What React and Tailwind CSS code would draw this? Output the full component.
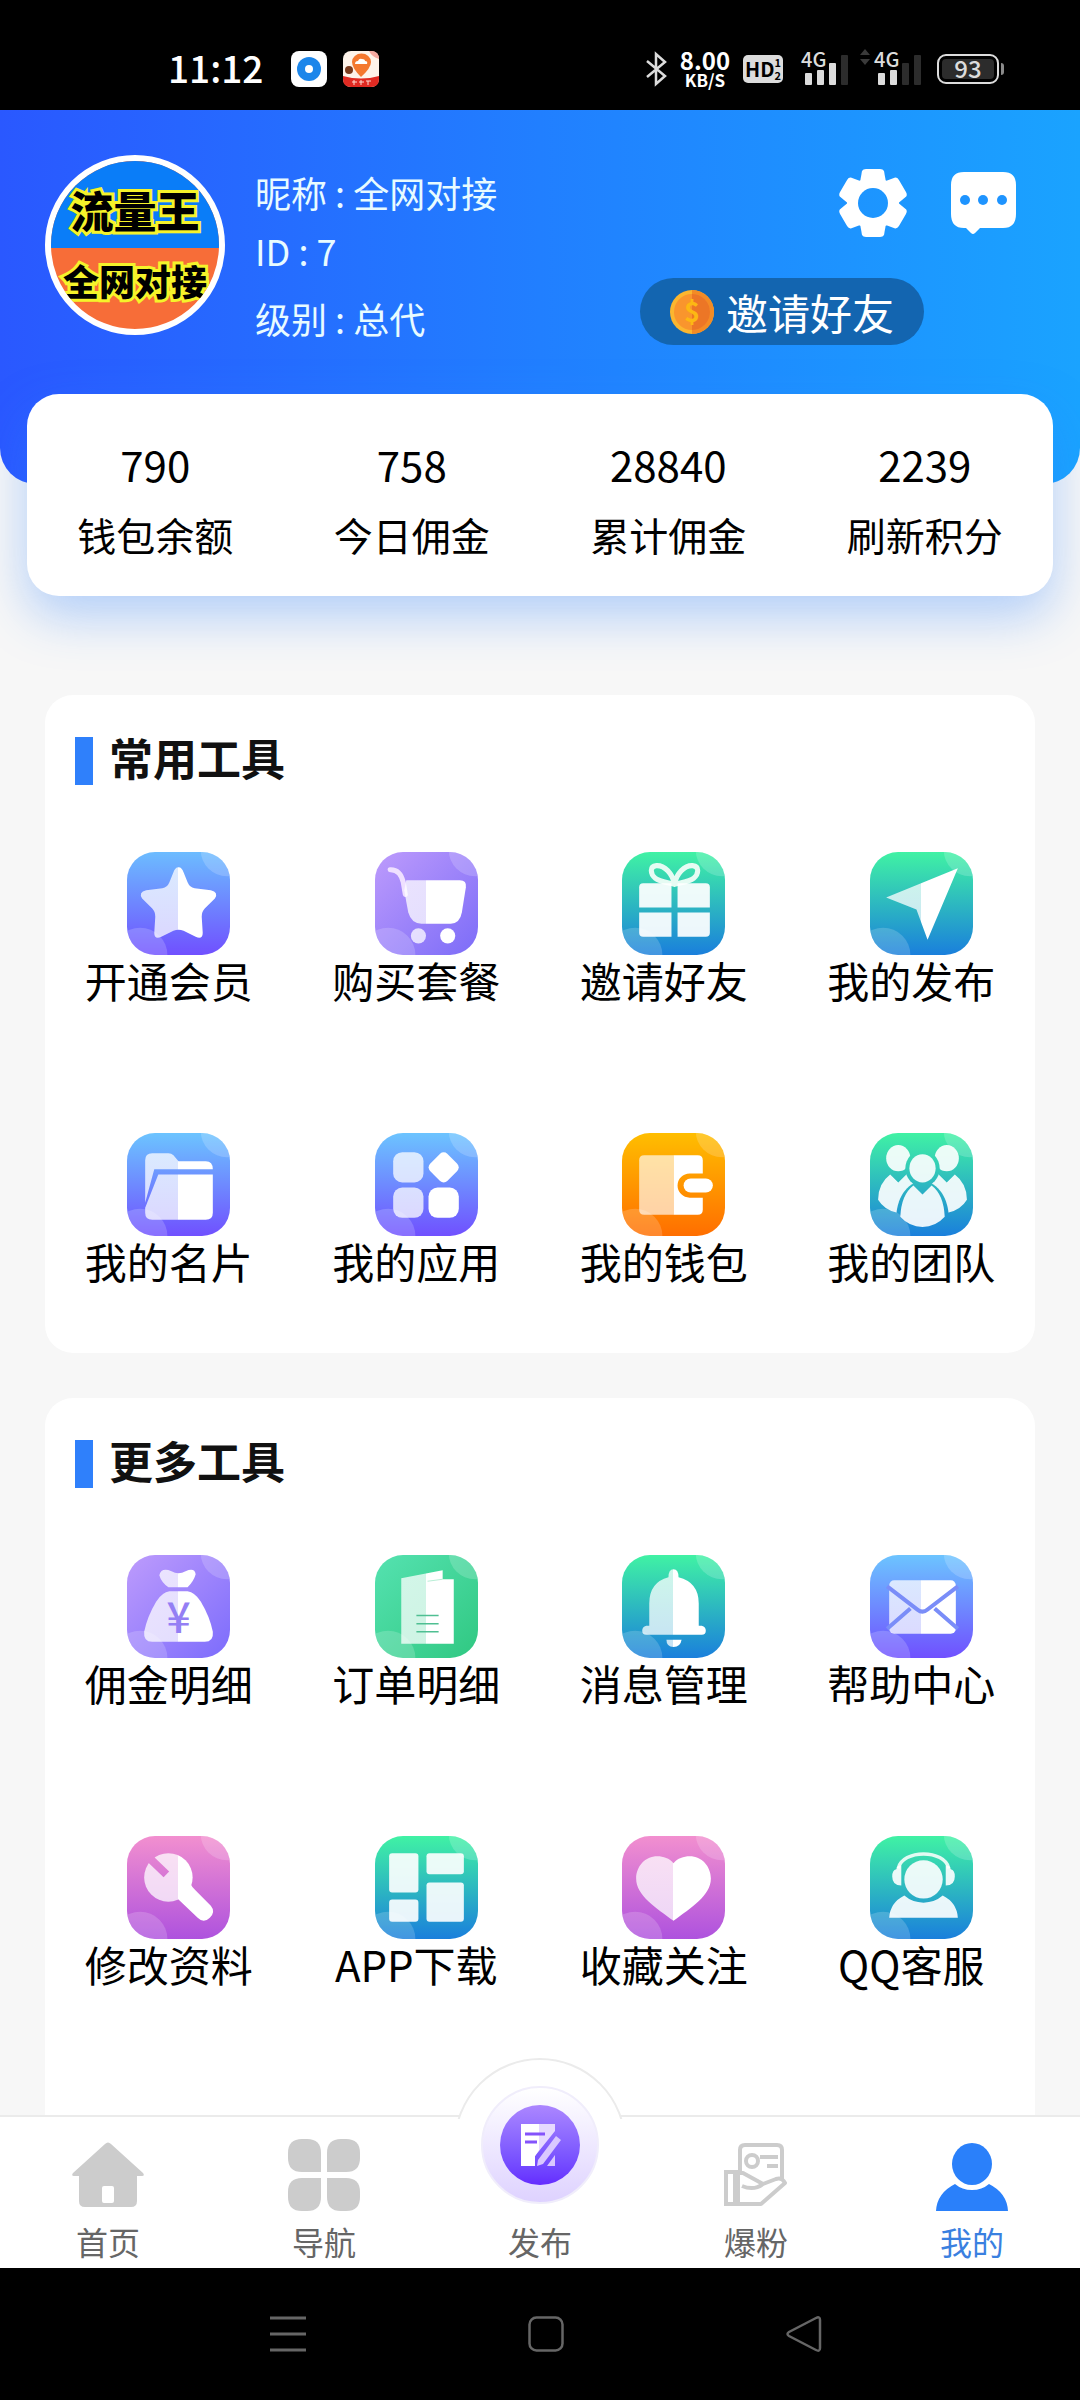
import clsx from 'clsx'
import { useId } from 'react'

const stats = [
  { label: '钱包余额', value: '790' },
  { label: '今日佣金', value: '758' },
  { label: '累计佣金', value: '28840' },
  { label: '刷新积分', value: '2239' },
]

// Every glyph is drawn on a 102x102 tile. "half" is a fill that is see-through left of the middle.
const glyphs = {
  star: ({ half }) => (
    <path
      fill={half}
      d="M51 15C53.500 15 55 17 56 20L60 30Q62 35 67 36L83 38Q91 40 87 46L77 56Q74 59 74 64L75 80Q75 87 68 84L56 78Q51 76 46 78L34 84Q27 87 27 80L28 64Q28 59 25 56L15 46Q11 40 19 38L35 36Q40 35 42 30L46 20C47 17 48.500 15 51 15Z"
    />
  ),
  cart: ({ half }) => (
    <>
      <path d="M15 17.500Q25 17 28 30L30 42" fill="none" stroke="#efe0ff" strokeWidth="5" strokeLinecap="round" />
      <path fill={half} d="M31 28H84Q91 28 90 35L86 60Q84 71 75 71H46Q36 71 33 60Q31 50 29 38Z" />
      <circle cx="43" cy="83" r="7.500" fill="#fff" fillOpacity="0.75" />
      <circle cx="72" cy="83" r="7.500" fill="#fff" />
    </>
  ),
  gift: () => (
    <g fill="#fff" fillOpacity="0.92">
      <path
        d="M52 32C50 21 42 13 34 13.500C27 14 28 22 33 26C38 30 46 30 52 32ZM52 32C54 21 62 13 70 13.500C77 14 76 22 71 26C66 30 58 30 52 32Z"
        fill="none"
        stroke="#e6fbf3"
        strokeWidth="5"
        strokeLinejoin="round"
      />
      <path d="M21 31H49V55H17V35Q17 31 21 31Z" />
      <path d="M55 31H83Q87 31 87 35V55H55Z" />
      <path d="M17 60H49V84H21Q17 84 17 80Z" />
      <path d="M55 60H87V80Q87 84 83 84H55Z" />
    </g>
  ),
  plane: ({ half }) => <path fill={half} d="M87 16L57 87L46 57L16 45Z" />,
  folder: ({ half }) => (
    <g fill={half}>
      <path d="M25 20H41Q44 20 46 22L51 28H78Q85 28 85 36H27L18 69V27Q18 20 25 20Z" />
      <path d="M31 41H85V79Q85 86 78 86H25Q18 86 18 79V74Z" />
    </g>
  ),
  apps: () => (
    <g fill="#fff">
      <rect x="18" y="19" width="30" height="30" rx="9" fillOpacity="0.75" />
      <rect x="18" y="54" width="30" height="30" rx="9" fillOpacity="0.75" />
      <rect x="53" y="54" width="30" height="30" rx="9" />
      <rect x="56" y="22" width="24" height="24" rx="5" transform="rotate(45 68 34)" />
    </g>
  ),
  wallet: () => (
    <g fill="#fff">
      <path d="M22 22H51V81H22Q17 81 17 76V27Q17 22 22 22Z" fillOpacity="0.65" />
      <path d="M51 22H75Q80 22 80 27V40H67A12 12 0 0 0 67 64H80V76Q80 81 75 81H51Z" />
      <rect x="61" y="45" width="29" height="14" rx="7" />
    </g>
  ),
  team: ({ id }) => (
    <>
      <mask id={`${id}-team`}>
        <rect width="102" height="102" fill="#fff" />
        <ellipse cx="52" cy="35" rx="17" ry="18" fill="#000" />
        <path d="M52 48C36 48 26 66 26 84L35 102H69L78 84C78 66 68 48 52 48Z" fill="#000" />
      </mask>
      <g fill="#fff" fillOpacity="0.9">
        <g mask={`url(#${id}-team)`}>
          <ellipse cx="28" cy="25" rx="12" ry="13" />
          <ellipse cx="76" cy="25" rx="12" ry="13" />
          <path d="M20 41L28 49L37 40Q46 50 46 68L27 79Q14 76 8 66Q8 50 20 41Z" />
          <path d="M84 41L76 49L67 40Q58 50 58 68L77 79Q90 76 96 66Q96 50 84 41Z" />
        </g>
        <ellipse cx="52" cy="35" rx="13" ry="14" />
        <path d="M43 52L52 61L61 52Q73 61 74 83Q65 93 52 93Q39 93 30 83Q31 61 43 52Z" />
      </g>
    </>
  ),
  moneyBag: ({ half }) => (
    <>
      <path fill={half} d="M32 20Q34 12 44 16Q51 20 58 16Q67 12 68 19Q66 26 60 32H41Q34 27 32 20Z" />
      <path
        fill={half}
        d="M42 36H60Q67 37 73 46Q82 61 85 76Q86 86 77 86H25Q16 86 17 76Q20 61 29 46Q35 37 42 36Z"
      />
      <text x="51" y="77" textAnchor="middle" fontSize="42" fontWeight="500" fill="#947ff4">
        ¥
      </text>
    </>
  ),
  order: ({ half }) => (
    <>
      <path fill={half} d="M26 23L67 15V24H78V88H26Z" />
      <path d="M52 26L67 24" stroke="#b9eed6" strokeWidth="1" />
      <path d="M41 60H63M41 68H63M41 76H63" stroke="#4fbf92" strokeWidth="1.500" />
    </>
  ),
  bell: ({ half }) => (
    <g fill={half}>
      <path d="M51 14Q56 14 56 22Q76 27 76 48V70H79Q83 71 83 75T79 79H24Q20 79 20 75T24 70H27V48Q27 27 46 22Q46 14 51 14Z" />
      <path d="M44 84H59Q58 91 51 91T44 84Z" />
    </g>
  ),
  mail: ({ half }) => (
    <>
      <rect x="19" y="25" width="66" height="53" rx="5" fill={half} />
      <path
        d="M17 31L47 54Q52 58 57 54L87 31M17 73L40 53M87 73L64 53"
        fill="none"
        stroke="#7a8df8"
        strokeWidth="4"
      />
    </>
  ),
  wrench: ({ half, id }) => (
    <>
      <mask id={`${id}-wrench`}>
        <rect width="102" height="102" fill="#fff" />
        <path d="M14 14L39 38" stroke="#000" strokeWidth="8" />
      </mask>
      <g mask={`url(#${id}-wrench)`}>
        <ellipse cx="41" cy="41" rx="24" ry="24" fill={half} />
      </g>
      <path d="M62 46Q64 50 68 54L83 69Q88 75 82 81T70 81L51 63V44Z" fill="#fff" />
    </>
  ),
  dashboard: () => (
    <g fill="#fff" fillOpacity="0.9">
      <rect x="14" y="17" width="29" height="39" rx="3" />
      <rect x="51" y="17" width="37" height="21" rx="3" />
      <rect x="14" y="63" width="29" height="22" rx="3" />
      <rect x="51" y="46" width="37" height="39" rx="3" />
    </g>
  ),
  heart: ({ half }) => (
    <path
      fill={half}
      d="M51 27C47 22 41 20 35 20C23 20 14 30 14 42C14 59 34 71 51 84C68 71 88 59 88 42C88 30 79 20 67 20C61 20 55 22 51 27Z"
    />
  ),
  service: () => (
    <g fill="#fff" fillOpacity="0.9">
      <circle cx="53" cy="43" r="19" />
      <path d="M28 32C32 13 74 13 78 32" fill="none" stroke="#e2faf2" strokeWidth="3.500" />
      <path d="M31 29V49Q22 49 22 40Q22 34 26 33Q27 29 31 29Z" />
      <path d="M75 29V49Q84 49 84 40Q84 34 80 33Q79 29 75 29Z" />
      <path d="M34 59Q42 66 53 66T72 59Q86 66 87 81H19Q20 66 34 59Z" />
    </g>
  ),
}

const sections = [
  {
    title: '常用工具',
    items: [
      { label: '开通会员', icon: 'star', color: 'bg-linear-to-b/srgb from-[#6cbcff] to-[#7050ff]' },
      { label: '购买套餐', icon: 'cart', color: 'bg-linear-to-br/srgb from-[#bd9bfc] to-[#7c6cf8]' },
      { label: '邀请好友', icon: 'gift', color: 'bg-linear-to-b/srgb from-[#40f2a4] to-[#1a7fdc]' },
      { label: '我的发布', icon: 'plane', color: 'bg-linear-to-b/srgb from-[#40f2a4] to-[#1a7fdc]' },
      { label: '我的名片', icon: 'folder', color: 'bg-linear-to-b/srgb from-[#6cc4ff] to-[#7050ff]' },
      { label: '我的应用', icon: 'apps', color: 'bg-linear-to-b/srgb from-[#6cc4ff] to-[#7050ff]' },
      { label: '我的钱包', icon: 'wallet', color: 'bg-linear-to-b/srgb from-[#ffbe00] to-[#ff6e00]' },
      { label: '我的团队', icon: 'team', color: 'bg-linear-to-b/srgb from-[#40f2a4] to-[#1a7fdc]' },
    ],
  },
  {
    title: '更多工具',
    items: [
      { label: '佣金明细', icon: 'moneyBag', color: 'bg-linear-to-br/srgb from-[#bd9bfc] to-[#7c6cfc]' },
      { label: '订单明细', icon: 'order', color: 'bg-linear-to-br/srgb from-[#55e2b0] to-[#30c882]' },
      { label: '消息管理', icon: 'bell', color: 'bg-linear-to-b/srgb from-[#40f2a4] to-[#1a7fdc]' },
      { label: '帮助中心', icon: 'mail', color: 'bg-linear-to-b/srgb from-[#6cc4ff] to-[#7050ff]' },
      { label: '修改资料', icon: 'wrench', color: 'bg-linear-to-b/srgb from-[#f28fcf] to-[#ae52de]' },
      { label: 'APP下载', icon: 'dashboard', color: 'bg-linear-to-b/srgb from-[#40f2a4] to-[#1a7fdc]' },
      { label: '收藏关注', icon: 'heart', color: 'bg-linear-to-b/srgb from-[#f28fcf] to-[#ae52de]' },
      { label: 'QQ客服', icon: 'service', color: 'bg-linear-to-b/srgb from-[#40f2a4] to-[#1a7fdc]' },
    ],
  },
]

const ToolIcon = ({ name, color }) => {
  const id = useId()
  const Glyph = glyphs[name]

  return (
    <span className={clsx('ml-5 block size-[103px] overflow-hidden rounded-[28px]', color)}>
      <svg viewBox="0 0 102 102" className="size-full" aria-hidden="true">
        <defs>
          <linearGradient id={id} gradientUnits="userSpaceOnUse" x1="0" x2="102" y1="0" y2="0">
            <stop offset="0.5" stopColor="#fff" stopOpacity="0.75" />
            <stop offset="0.5" stopColor="#fff" />
          </linearGradient>
        </defs>
        <circle cx="13" cy="102" r="27" fill="#fff" fillOpacity="0.18" />
        <circle cx="99" cy="-2" r="26" fill="#fff" fillOpacity="0.18" />
        <Glyph half={`url(#${id})`} id={id} />
      </svg>
    </span>
  )
}

const Signal = ({ bars }) => (
  <div className="relative flex h-8 items-end gap-[5px]">
    <span className="absolute -top-[2px] -left-1 text-[20px] leading-4 font-medium">4G</span>
    {['h-3', 'h-[15px]', 'h-[22px]', 'h-[30px]'].map((height, index) => (
      <span key={height} className={clsx('w-[7px] rounded-[1px]', height, index < bars ? 'bg-[#dcdcdc]' : 'bg-[#2c2c2c]')} />
    ))}
  </div>
)

const StatusBar = () => (
  <div className="flex h-[110px] shrink-0 items-center justify-between bg-black pt-7 pr-[76px] pl-[168px] text-[#dcdcdc]">
    <div className="flex items-center">
      <span className="mb-1 text-[37px] leading-9 font-medium text-white">11:12</span>
      <svg viewBox="0 0 36 36" className="ml-7 size-9" aria-hidden="true">
        <rect width="36" height="36" rx="8" fill="#fff" />
        <circle cx="18" cy="18" r="12" fill="#1c86ea" />
        <circle cx="18" cy="18" r="4" fill="#fff" />
      </svg>
      <svg viewBox="0 0 36 36" className="ml-4 size-9" aria-hidden="true">
        <rect width="36" height="36" rx="8" fill="#fdf3ea" />
        <path d="M26 0H28Q36 0 36 8Q29 6 26 0Z" fill="#f4a9a0" />
        <path d="M18 26Q9 17 9 11A9 8 0 0 1 28 11Q28 17 18 26Z" fill="#f4782f" />
        <path d="M12 13Q12 10 15 10Q16 7 19 8Q22 8 22 10Q25 10 24 13Z" fill="#fff" />
        <circle cx="6" cy="19" r="4" fill="#7a3b1e" />
        <path d="M0 25Q18 30 36 25V28Q36 36 28 36H8Q0 36 0 28Z" fill="#e02a22" />
        <path d="M9 31H14M11 29V34M16 31H21M18 29V34M23 30H28M25 30V34" stroke="#ffd9cf" strokeWidth="1" />
      </svg>
    </div>

    <div className="flex items-center">
      <svg viewBox="0 0 22 36" className="h-9 w-[22px]" fill="none" stroke="currentColor" strokeWidth="2.500" aria-hidden="true">
        <path d="M2 10L20 25L11 33V3L20 11L2 26" />
      </svg>
      <div className="ml-3 flex w-[52px] flex-col items-center font-bold text-white">
        <span className="text-[24px] leading-[22px]">8.00</span>
        <span className="text-[17px] leading-[18px]">KB/S</span>
      </div>
      <div className="ml-3 flex h-7 w-10 items-center justify-center rounded-[5px] bg-[#dcdcdc] text-black">
        <span className="text-[20px] leading-7 font-bold">HD</span>
        <span className="flex flex-col text-[11px] leading-[13px] font-bold">
          <span>1</span>
          <span>2</span>
        </span>
      </div>
      <div className="ml-[22px]">
        <Signal bars={3} />
      </div>
      <svg viewBox="0 0 10 16" className="ml-3 h-4 w-[10px] self-start" fill="#3a3a3a" aria-hidden="true">
        <path d="M0 6L5 0L10 6ZM0 10H10L5 16Z" />
      </svg>
      <div className="ml-2">
        <Signal bars={2} />
      </div>
      <div className="ml-4 flex items-center">
        <div className="flex h-[30px] w-[62px] rounded-[9px] border-2 border-[#dcdcdc] p-[3px]">
          <span className="w-full rounded-[4px] bg-[#2c2c2c] text-center text-[24px] leading-[18px] font-medium">93</span>
        </div>
        <span className="ml-[2px] h-3 w-[3px] rounded-r bg-[#8a8a8a]" />
      </div>
    </div>
  </div>
)

const Profile = () => (
  <header className="flex h-[374px] items-start rounded-b-[36px] bg-linear-to-r/srgb from-[#2a58ff] via-[#217fff] to-[#1aa3ff] pt-[45px] pr-[63px] pl-[45px] text-[#e8fbff]">
    <div className="flex size-[180px] shrink-0 flex-col items-center overflow-hidden rounded-full border-6 border-white bg-[#f76d38] font-black whitespace-nowrap text-black">
      <div className="flex h-[87px] w-full items-center justify-center bg-[#0a7df8] pt-2">
        <span className="text-[43px] leading-[54px] [-webkit-text-stroke:6px_#f5f32a] [paint-order:stroke_fill]">流量王</span>
      </div>
      <span className="mt-2 text-[36px] leading-[48px] [-webkit-text-stroke:6px_#f5f32a] [paint-order:stroke_fill]">全网对接</span>
    </div>

    <div className="mt-2 ml-[30px] flex flex-1 flex-col text-[36px] leading-[58px]">
      <span>昵称 : 全网对接</span>
      <span>ID : 7</span>
      <span className="mt-[10px]">级别 : 总代</span>
    </div>

    <div className="mt-[13px] flex flex-col items-end text-white">
      <div className="flex items-center gap-[43px]">
        <button type="button" aria-label="设置">
          <svg viewBox="0 0 68 70" className="h-[70px] w-[68px]" aria-hidden="true">
            <mask id="gear-hole">
              <rect width="68" height="70" fill="#fff" />
              <circle cx="34" cy="35" r="15" fill="#000" />
            </mask>
            <g fill="currentColor" mask="url(#gear-hole)">
              <circle cx="34" cy="35" r="26" />
              <path id="gear-tooth" d="M20 20L23 3Q24 1 27 1H41Q44 1 45 3L48 20V50L45 67Q44 69 41 69H27Q24 69 23 67L20 50Z" />
              <use href="#gear-tooth" transform="rotate(60 34 35)" />
              <use href="#gear-tooth" transform="rotate(120 34 35)" />
            </g>
          </svg>
        </button>
        <button type="button" aria-label="消息">
          <svg viewBox="0 0 67 64" className="h-16 w-[67px]" aria-hidden="true">
            <path d="M14 1H53Q66 1 66 14V43Q66 57 53 57H30L25 62Q23 64 21 62L16 57H14Q1 57 1 43V14Q1 1 14 1Z" fill="currentColor" />
            <g fill="#1e94ff">
              <circle cx="15" cy="29" r="5" />
              <circle cx="33" cy="29" r="5" />
              <circle cx="52" cy="29" r="5" />
            </g>
          </svg>
        </button>
      </div>
      <button type="button" className="mt-10 mr-[93px] flex h-[67px] items-center rounded-full bg-[#1365b0] pr-[30px] pl-[30px]">
        <svg viewBox="0 0 44 44" className="size-11" aria-hidden="true">
          <circle cx="22" cy="22" r="22" fill="#fbb62f" />
          <path d="M22 0A22 22 0 0 1 22 44Z" fill="#f38b25" />
          <circle cx="22" cy="22" r="18" fill="#f9952d" />
          <path d="M22 4A18 18 0 0 1 22 40Z" fill="#ec7626" />
          <text x="22" y="32" textAnchor="middle" fontSize="27" fontWeight="700" fill="#fdb813">
            $
          </text>
        </svg>
        <span className="ml-3 text-[42px] leading-[64px]">邀请好友</span>
      </button>
    </div>
  </header>
)

const ToolSection = ({ title, items, className }) => (
  <section className={clsx('mx-[45px] bg-white pt-[42px]', className)}>
    <div className="ml-[30px] flex h-12 items-start">
      <span className="h-12 w-[18px] bg-[#2f80fb]" />
      <h2 className="ml-4 text-[44px] leading-10 font-bold text-[#111]">{title}</h2>
    </div>
    <div className="mt-[67px] grid grid-cols-4 gap-y-[128px]">
      {items.map((item) => (
        <button key={item.label} type="button" className="flex flex-col items-center">
          <ToolIcon name={item.icon} color={item.color} />
          <span className="text-[42px] leading-[50px]">{item.label}</span>
        </button>
      ))}
    </div>
  </section>
)

const HomeIcon = () => (
  <svg viewBox="0 0 72 72" className="size-[72px]" fill="#ccc" aria-hidden="true">
    <path
      fillRule="evenodd"
      d="M33 5Q36 2 39 5L71 34Q73 37 70 37H65V62Q65 68 59 68H13Q7 68 7 62V37H2Q-1 37 1 34ZM30 49V62Q30 64 32 64H40Q42 64 42 62V49Q42 47 40 47H32Q30 47 30 49Z"
    />
  </svg>
)

const GridIcon = () => (
  <svg viewBox="0 0 72 72" className="size-[72px]" fill="#ccc" aria-hidden="true">
    <path d="M14 0H19Q33 0 33 14V33H14Q0 33 0 19V14Q0 0 14 0Z" />
    <path d="M53 0H58Q72 0 72 14V19Q72 33 58 33H39V14Q39 0 53 0Z" />
    <path d="M14 39H33V58Q33 72 19 72H14Q0 72 0 58V53Q0 39 14 39Z" />
    <path d="M39 39H58Q72 39 72 53V58Q72 72 58 72H53Q39 72 39 58Z" />
  </svg>
)

const HandCardIcon = () => (
  <svg viewBox="0 0 72 72" className="size-[72px]" fill="none" stroke="#ccc" strokeWidth="4" aria-hidden="true">
    <path d="M20 32V11Q20 6 25 6H57Q62 6 62 11V41" />
    <circle cx="32" cy="22" r="6" />
    <path d="M40 18H58M47 27H58" />
    <path d="M6 33H18V65H6ZM15 33V65" />
    <path d="M18 34H23L43 45Q34 52 22 47M43 45L56 40Q62 38 65 44L41 65H18" strokeLinejoin="round" />
  </svg>
)

const UserIcon = () => (
  <svg viewBox="0 0 72 72" className="size-[72px]" fill="#2a80fa" aria-hidden="true">
    <ellipse cx="36" cy="25" rx="20" ry="21" />
    <path d="M19 45Q26 51 36 51T53 45Q71 54 72 72H0Q1 54 19 45Z" />
  </svg>
)

const tabs = [
  { label: '首页', icon: HomeIcon },
  { label: '导航', icon: GridIcon },
  { label: '发布', publish: true },
  { label: '爆粉', icon: HandCardIcon },
  { label: '我的', icon: UserIcon, active: true },
]

const PublishButton = () => (
  <span className="relative -mt-9 flex size-[118px] items-center justify-center rounded-full border-2 border-[#f0edfb] bg-linear-to-b from-white to-[#ded2ff]">
    <span className="flex size-20 items-center justify-center rounded-full bg-linear-to-b from-[#ac86ff] to-[#652bff]">
      <svg viewBox="0 0 42 42" className="size-[42px]" aria-hidden="true">
        <path d="M2 0H36V7L16 32V42H2Z" fill="#e6d9ff" />
        <path d="M2 0H20V26L16 32V42H2Z" fill="#fff" />
        <path d="M6 10H26M6 18H18" stroke="#8453fb" strokeWidth="3" />
        <path d="M37 12L42 16L24 40L18 42L19 36Z" fill="#d9c8ff" />
        <path d="M36 31V42H28Z" fill="#d9c8ff" />
      </svg>
    </span>
  </span>
)

const TabBar = () => (
  <nav className="relative grid h-[153px] shrink-0 grid-cols-5 border-t-2 border-[#ebebeb] bg-white">
    {/* Raised bump behind the publish button */}
    <div className="absolute bottom-[149px] left-1/2 h-[61px] w-[172px] -translate-x-1/2 overflow-hidden">
      <div className="size-[172px] rounded-full border-2 border-[#ebebeb] bg-white" />
    </div>
    {tabs.map(({ label, icon: Icon, publish, active }) => (
      <a key={label} href="#" className={clsx('relative flex flex-col items-center justify-end', active ? 'text-[#3a80e0]' : 'text-[#666]')}>
        {publish ? <PublishButton /> : <Icon />}
        <span className={clsx('mb-1 text-[32px] leading-[46px]', publish ? 'mt-[14px]' : 'mt-[7px]')}>{label}</span>
      </a>
    ))}
  </nav>
)

const SystemBar = () => (
  <div className="flex h-[132px] shrink-0 items-center justify-center gap-[222px] bg-black pl-3 text-[#666]">
    <button type="button" aria-label="最近任务">
      <svg viewBox="0 0 36 36" className="size-9" fill="none" stroke="currentColor" strokeWidth="3" aria-hidden="true">
        <path d="M0 2H36M0 18H36M0 34H36" />
      </svg>
    </button>
    <button type="button" aria-label="主屏幕">
      <svg viewBox="0 0 36 36" className="size-9" fill="none" stroke="currentColor" strokeWidth="2.500" aria-hidden="true">
        <rect x="1.500" y="1.500" width="33" height="33" rx="7" />
      </svg>
    </button>
    <button type="button" aria-label="返回">
      <svg viewBox="0 0 36 36" className="size-9" fill="none" stroke="currentColor" strokeWidth="2.500" aria-hidden="true">
        <path d="M30 2Q34 0 34 4V32Q34 36 30 34L3 20Q0 18 3 16Z" />
      </svg>
    </button>
  </div>
)

export default function App() {
  return (
    <div className="flex min-h-screen flex-col bg-[#f7f7f7] font-['Noto_Sans_CJK_SC',sans-serif] text-black">
      <StatusBar />
      <main className="flex flex-1 flex-col">
        <Profile />
        <div className="relative mx-[27px] -mt-[90px] grid grid-cols-4 rounded-[32px] bg-white pt-10 pb-8 shadow-[0_20px_50px_rgba(47,128,251,0.35)]">
          {stats.map((stat) => (
            <div key={stat.label} className="flex flex-col items-center gap-[10px] leading-[60px]">
              <span className="text-[42px]">{stat.value}</span>
              <span className="text-[39px]">{stat.label}</span>
            </div>
          ))}
        </div>
        <ToolSection {...sections[0]} className="mt-[99px] rounded-[28px] pb-[67px]" />
        <ToolSection {...sections[1]} className="mt-[45px] flex-1 rounded-t-[28px]" />
      </main>
      <TabBar />
      <SystemBar />
    </div>
  )
}
